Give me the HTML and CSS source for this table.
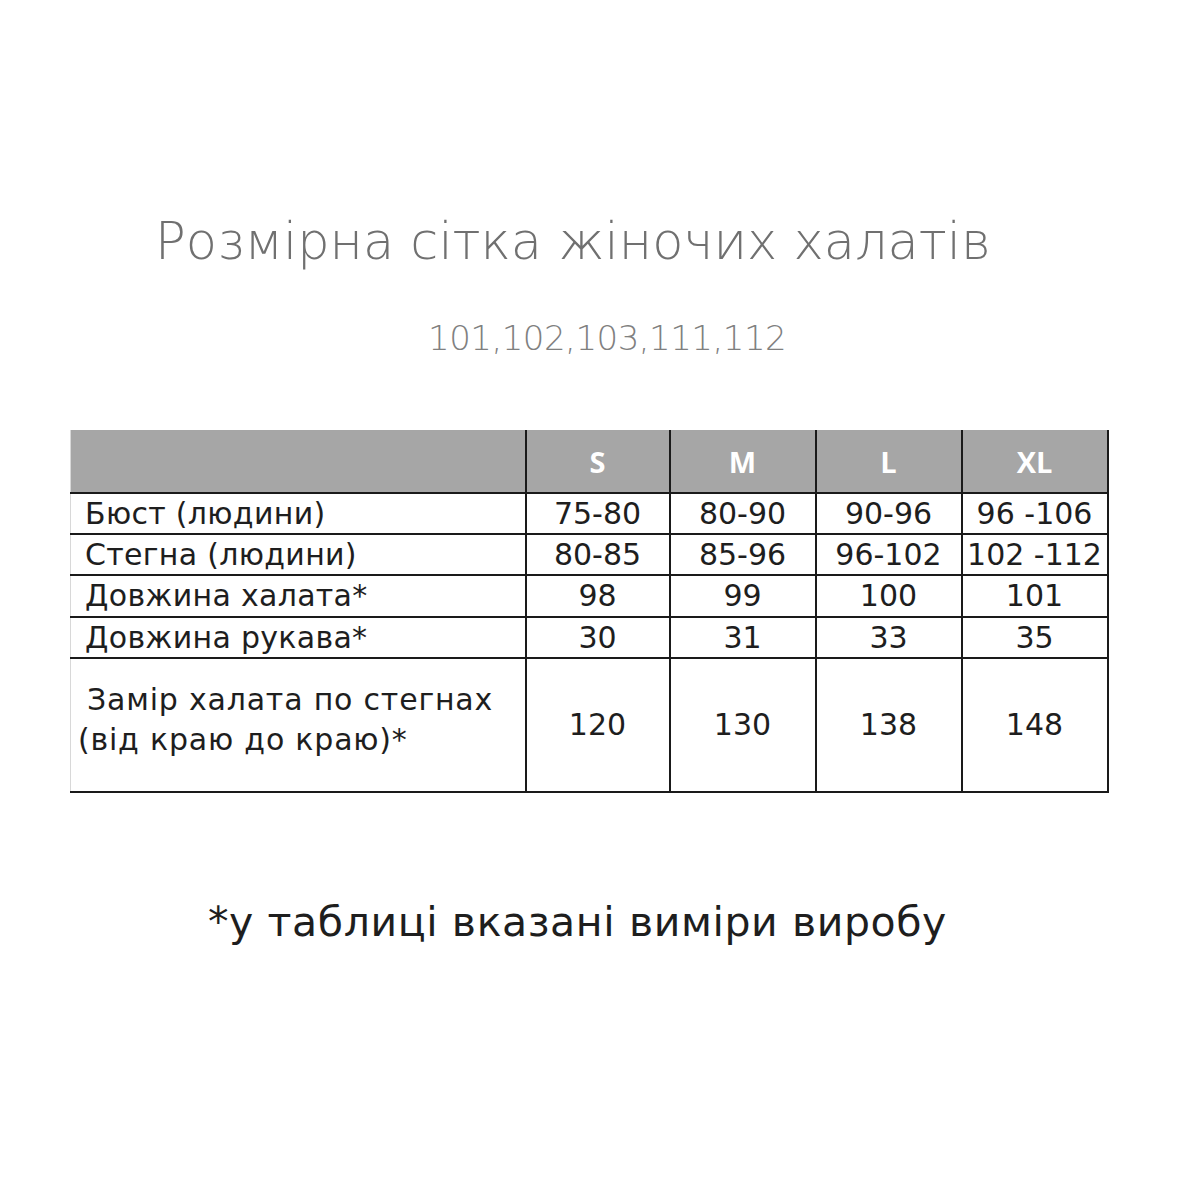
FILE: index.html
```html
<!DOCTYPE html>
<html lang="uk">
<head>
<meta charset="utf-8">
<title>Розмірна сітка жіночих халатів</title>
<link rel="stylesheet" href="styles.css">
</head>
<body>
<div class="page">
  <h1 class="title">Розмірна сітка жіночих халатів</h1>
  <p class="models">101,102,103,111,112</p>
  <table class="sizes">
    <colgroup>
      <col class="c-label"><col class="c-s"><col class="c-size"><col class="c-size"><col class="c-size">
    </colgroup>
    <thead>
      <tr class="head">
        <th></th><th>S</th><th>M</th><th>L</th><th>XL</th>
      </tr>
    </thead>
    <tbody>
      <tr class="row"><td class="label">Бюст (людини)</td><td>75-80</td><td>80-90</td><td>90-96</td><td>96 -106</td></tr>
      <tr class="row"><td class="label">Стегна (людини)</td><td>80-85</td><td>85-96</td><td>96-102</td><td>102 -112</td></tr>
      <tr class="row r3"><td class="label">Довжина халата*</td><td>98</td><td>99</td><td>100</td><td>101</td></tr>
      <tr class="row"><td class="label">Довжина рукава*</td><td>30</td><td>31</td><td>33</td><td>35</td></tr>
      <tr class="row tall"><td class="label two"><span class="l1">Замір халата по стегнах</span><span class="l2">(від краю до краю)*</span></td><td>120</td><td>130</td><td>138</td><td>148</td></tr>
    </tbody>
  </table>
  <p class="note">*у таблиці вказані виміри виробу</p>
</div>
</body>
</html>
```
FILE: styles.css
```css
html, body {
  margin: 0;
  padding: 0;
  background: #ffffff;
}
.page {
  width: 1200px;
  height: 1200px;
  font-family: "DejaVu Sans", "Liberation Sans", sans-serif;
  color: #1e1e1e;
}
.title {
  margin: 0;
  padding-top: 212px;
  padding-left: 155px;
  font-size: 51px;
  line-height: 60px;
  font-weight: 200;
  color: #707070;
  white-space: nowrap;
}
.models {
  margin: 0;
  margin-top: 46px;
  padding-left: 428px;
  font-size: 34px;
  line-height: 40px;
  font-weight: 200;
  color: #808080;
  letter-spacing: -0.5px;
  white-space: nowrap;
}
.sizes {
  margin-top: 72px;
  margin-left: 70px;
  width: 1036px;
  border-collapse: collapse;
  table-layout: fixed;
}
.c-label { width: 455px; }
.c-s { width: 144px; }
.c-size { width: 146px; }
.head th {
  height: 62px;
  padding: 0;
  background: #a6a6a6;
  color: #ffffff;
  font-family: "Open Sans", "Liberation Sans", sans-serif;
  font-weight: 700;
  font-size: 29px;
  text-align: center;
  border-left: 2px solid #1a1a1a;
  border-bottom: 2px solid #1a1a1a;
  border-right: 2px solid #1a1a1a;
}
.head th:first-child {
  border-left: 1px solid #d8d8d8;
}
.row td {
  height: 39px;
  padding: 0;
  font-size: 30px;
  line-height: 36px;
  text-align: center;
  border: 2px solid #1a1a1a;
  white-space: nowrap;
}
.row.r3 td {
  height: 40px;
}
.row td.label {
  text-align: left;
  padding-left: 14px;
  letter-spacing: 0.3px;
  border-left: 1px solid #d8d8d8;
}
.row.tall td {
  height: 132px;
}
.row td.two {
  padding-left: 7px;
  vertical-align: middle;
  letter-spacing: 0.8px;
}
.two .l1, .two .l2 {
  display: block;
  line-height: 40px;
}
.two .l1 {
  padding-left: 9px;
}
.two .l2 {
  padding-bottom: 10px;
}
.note {
  margin: 0;
  margin-top: 104px;
  padding-left: 208px;
  font-size: 41px;
  line-height: 50px;
  letter-spacing: 0.6px;
  color: #1e1e1e;
  white-space: nowrap;
}
```
